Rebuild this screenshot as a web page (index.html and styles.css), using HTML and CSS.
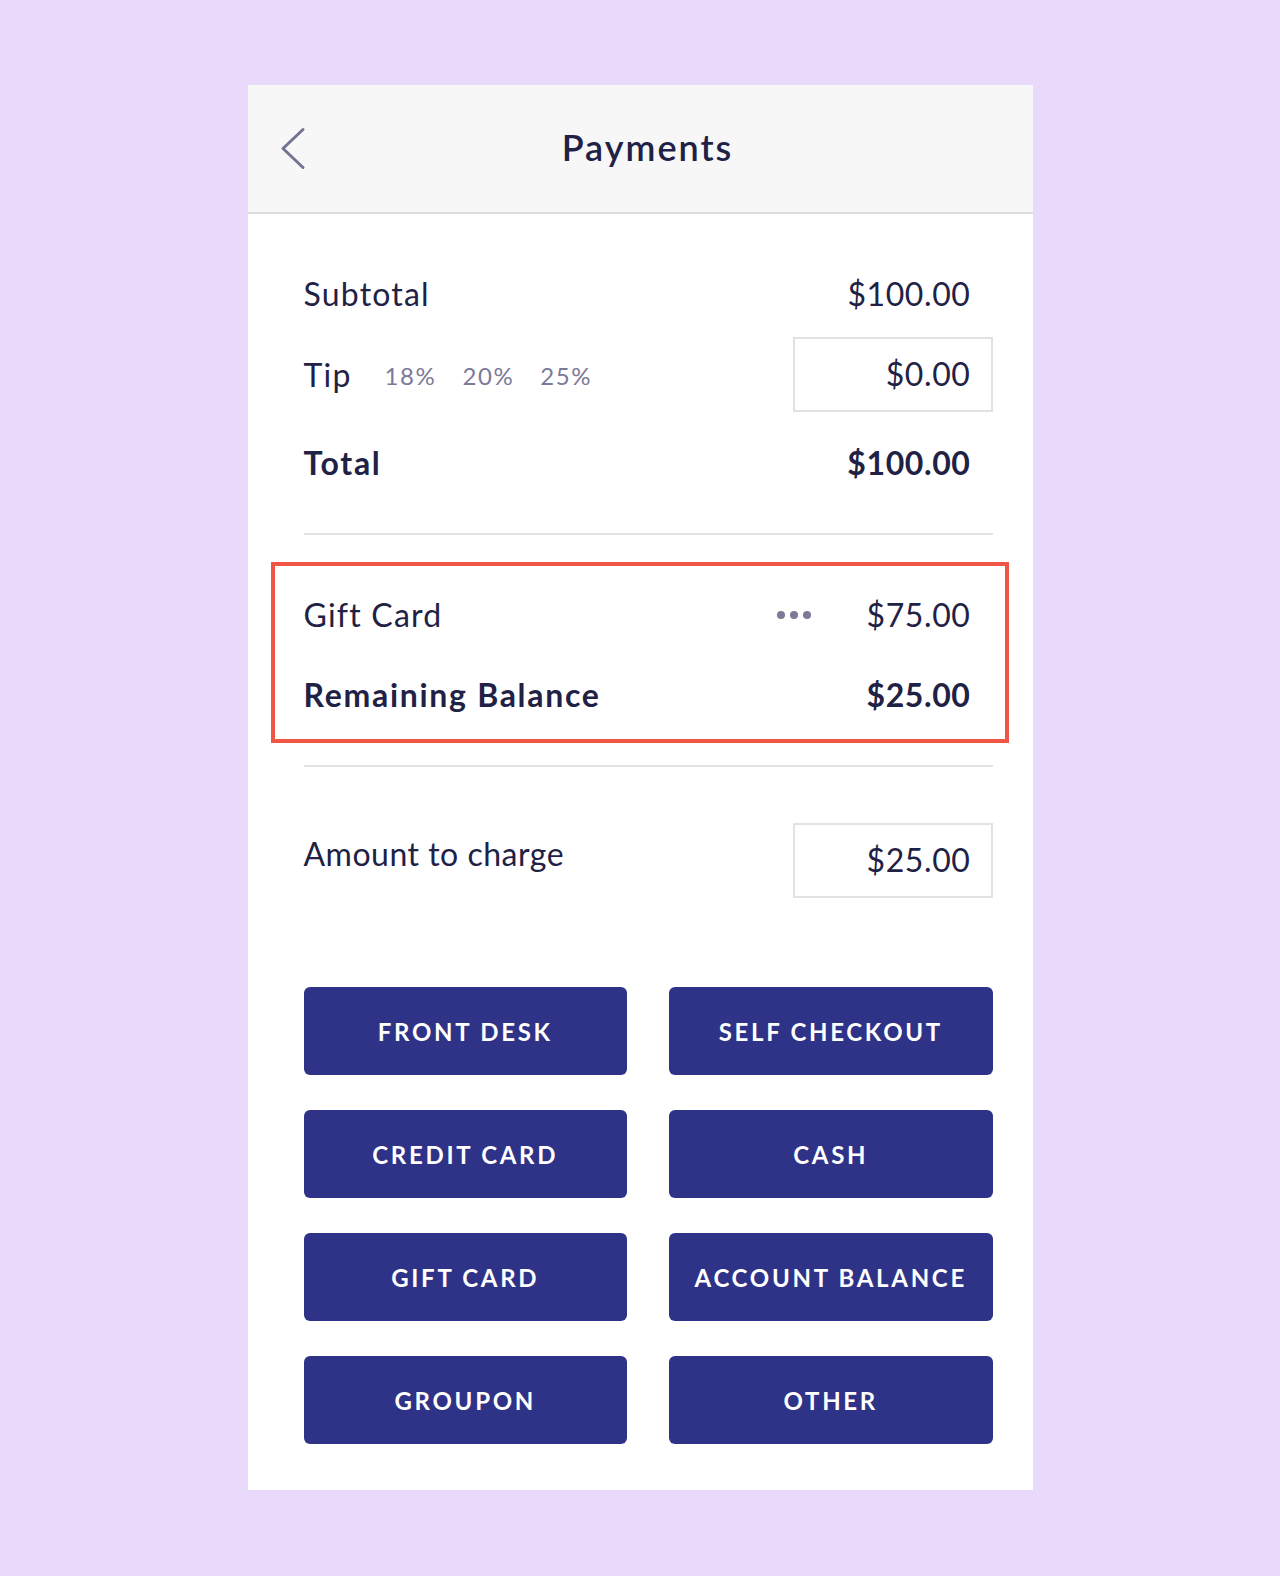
FILE: index.html
```html
<!DOCTYPE html>
<html lang="en">
<head>
<meta charset="utf-8">
<title>Payments</title>
<link rel="stylesheet" href="styles.css">
</head>
<body>
<div class="card">
  <header class="header">
    <button class="back" aria-label="Back">
      <svg width="26" height="44" viewBox="0 0 26 44"><polyline points="23,3.5 3,22.5 23,41.5" fill="none" stroke="#737393" stroke-width="3" stroke-linecap="round" stroke-linejoin="round"/></svg>
    </button>
    <h1 class="title">Payments</h1>
    <span class="spacer"></span>
  </header>

  <main class="content">
    <div class="row row-sub">
      <span class="label">Subtotal</span>
      <span class="value">$100.00</span>
    </div>
    <div class="row row-tip">
      <span class="label">Tip</span>
      <span class="pcts"><span class="pct">18%</span><span class="pct">20%</span><span class="pct">25%</span></span>
      <span class="box">$0.00</span>
    </div>
    <div class="row row-total">
      <span class="label bold">Total</span>
      <span class="value bold">$100.00</span>
    </div>

    <hr class="divider div1">

    <section class="highlight">
      <div class="hrow">
        <span class="label">Gift Card</span>
        <span class="dots"><i></i><i></i><i></i></span>
        <span class="value wide">$75.00</span>
      </div>
      <div class="hrow hrow2">
        <span class="label bold">Remaining Balance</span>
        <span class="value bold">$25.00</span>
      </div>
    </section>

    <hr class="divider div2">

    <div class="row row-amount">
      <span class="label amount-label">Amount to charge</span>
      <span class="box">$25.00</span>
    </div>

    <div class="buttons">
      <button class="pay">FRONT DESK</button>
      <button class="pay">SELF CHECKOUT</button>
      <button class="pay">CREDIT CARD</button>
      <button class="pay">CASH</button>
      <button class="pay">GIFT CARD</button>
      <button class="pay">ACCOUNT BALANCE</button>
      <button class="pay">GROUPON</button>
      <button class="pay">OTHER</button>
    </div>
  </main>
</div>
</body>
</html>
```

FILE: styles.css
```css
* { box-sizing: border-box; }

html, body {
  margin: 0;
  padding: 0;
}

body {
  background: #e9dafb;
  font-family: "Lato", "Noto Sans", sans-serif;
  color: #1f2245;
  min-height: 1576px;
}

.card {
  width: 785px;
  margin: 85px auto 0;
  background: #ffffff;
  padding-bottom: 46px;
}

.header {
  height: 129px;
  background: #f7f7f7;
  border-bottom: 2px solid #dedede;
  display: grid;
  grid-template-columns: 1fr auto 1fr;
  align-items: center;
  padding: 0 32px;
}

.back {
  background: none;
  border: 0;
  padding: 0;
  margin: 0;
  width: 26px;
  height: 44px;
  display: block;
  justify-self: start;
  margin-top: -2px;
}

.back svg { display: block; }

.title {
  margin: 0 0 0 15px;
  font-size: 36px;
  line-height: 44px;
  font-weight: 600;
  letter-spacing: 2px;
  color: #1f2245;
  padding-bottom: 4px;
}

.content {
  padding: 0 40px 0 56px;
}

.row {
  display: flex;
  align-items: center;
  height: 75px;
}

.label {
  font-size: 32px;
  line-height: 40px;
  font-weight: 400;
  letter-spacing: 1.2px;
  flex: 1;
  white-space: nowrap;
}

.label.bold { letter-spacing: 1.7px; }

.bold { font-weight: 700; }

.value {
  font-size: 32px;
  line-height: 40px;
  letter-spacing: 0.6px;
  padding-right: 22px;
  text-align: right;
  white-space: nowrap;
}

.row-sub { margin-top: 42px; }
.row-tip { margin-top: 6px; }
.row-total { margin-top: 13px; }

.row-tip .label { flex: 0 0 auto; }

.pcts {
  flex: 1;
  display: flex;
  gap: 26px;
  padding-left: 33px;
  padding-top: 2px;
}

.pct {
  font-size: 24px;
  line-height: 30px;
  letter-spacing: 1.6px;
  color: #7b7a98;
}

.box {
  width: 200px;
  height: 75px;
  border: 2px solid #e2e2e2;
  font-size: 32px;
  line-height: 40px;
  letter-spacing: 0.6px;
  text-align: right;
  padding: 15px 20px 0 0;
  white-space: nowrap;
}

.divider {
  margin: 0;
  border: 0;
  height: 2px;
  background: #e2e2e2;
}

.div1 { margin-top: 33px; }
.div2 { margin-top: 22px; }

.highlight {
  margin: 27px -16px 0 -33px;
  border: 4px solid #ef5646;
  padding: 29px 12px 24px 29px;
}

.hrow {
  display: flex;
  align-items: center;
  height: 40px;
}

.hrow2 { margin-top: 40px; }

.dots {
  display: flex;
  gap: 5px;
}

.dots i {
  display: block;
  width: 8px;
  height: 8px;
  border-radius: 50%;
  background: #7b7a98;
}

.value.wide { width: 182px; }

.row-amount {
  margin-top: 56px;
  align-items: flex-start;
}

.amount-label {
  margin-top: 11px;
  letter-spacing: 0.5px;
}

.buttons {
  margin-top: 89px;
  display: grid;
  grid-template-columns: 1fr 1fr;
  column-gap: 42px;
  row-gap: 35px;
}

.pay {
  height: 88px;
  border: 0;
  border-radius: 6px;
  background: #2f3388;
  color: #ffffff;
  font-family: "Lato", "Noto Sans", sans-serif;
  font-size: 24px;
  font-weight: 700;
  letter-spacing: 2.7px;
  padding: 0;
}
```
